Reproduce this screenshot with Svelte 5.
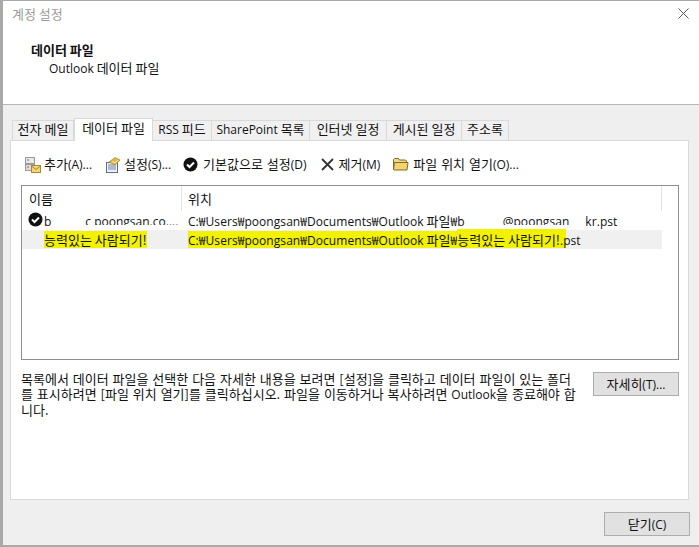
<script>
  const tabs = [
    { ko: '전자 메일', w: 62 },
    { ko: '데이터 파일', w: 79, active: true },
    { lat: 'RSS', ko: ' 피드', w: 59 },
    { lat: 'SharePoint', ko: ' 목록', w: 98 },
    { ko: '인터넷 일정', w: 77 },
    { ko: '게시된 일정', w: 75 },
    { ko: '주소록', w: 47 }
  ];
</script>

<div class="window">
  <div class="titlebar">
    <span class="title">계정 설정</span>
    <svg class="close" width="11" height="11" viewBox="0 0 11 11"><path d="M.5.5l10 10M10.5.5l-10 10" stroke="#555" fill="none"/></svg>
  </div>
  <div class="header">
    <div class="h1">데이터 파일</div>
    <div class="h2"><span class="lat">Outlook</span> 데이터 파일</div>
  </div>
  <div class="body">
    <div class="tabs">
      {#each tabs as t}
        <div class="tab" class:active={t.active} style="width:{t.w}px">{#if t.lat}<span class="lat">{t.lat}</span>{/if}{t.ko}</div>
      {/each}
    </div>
    <div class="panel">
      <div class="toolbar">
        <div class="tool add">
          <svg width="17" height="17" viewBox="0 0 17 17">
            <rect x="1.5" y="1.5" width="9" height="6" fill="#e8e8e8" stroke="#9a9a9a"/>
            <rect x="1.5" y="8.5" width="9" height="6" fill="#dcdcdc" stroke="#9a9a9a"/>
            <rect x="3" y="3.5" width="2" height="1" fill="#777"/>
            <rect x="3" y="10.5" width="2" height="1" fill="#777"/>
            <rect x="7.5" y="9.5" width="9" height="7" fill="#f2d675" stroke="#a98a2e"/>
            <path d="M7.5 10l4.500 3.500 4.500-3.500" fill="none" stroke="#a98a2e"/>
          </svg>
          <span>추가<span class="lat">(A)...</span></span>
        </div>
        <div class="tool set">
          <svg width="17" height="17" viewBox="0 0 17 17">
            <rect x="2.500" y="6.500" width="11" height="10" fill="#eef2f6" stroke="#5b6f86"/>
            <path d="M4 9h8M4 11h8M4 13h8" stroke="#6e859e"/>
            <path d="M5 6l6-4.500 5 2.500-5 5z" fill="#e2b94c" stroke="#a17f22" stroke-width=".7"/>
            <path d="M8 5.500l3 1.500 3-3" stroke="#fff2b8" fill="none" stroke-width=".8"/>
          </svg>
          <span>설정<span class="lat">(S)...</span></span>
        </div>
        <div class="tool def">
          <svg width="15" height="15" viewBox="0 0 15 15">
            <circle cx="7.500" cy="7.500" r="7" fill="#111"/>
            <path d="M4 7.500l2.500 2.500 4.500-4.500" stroke="#fff" stroke-width="2" fill="none"/>
          </svg>
          <span>기본값으로 설정<span class="lat">(D)</span></span>
        </div>
        <div class="tool rem">
          <svg width="13" height="13" viewBox="0 0 13 13"><path d="M1 1l11 11M12 1L1 12" stroke="#333" stroke-width="1.800" fill="none"/></svg>
          <span>제거<span class="lat">(M)</span></span>
        </div>
        <div class="tool open">
          <svg width="16" height="14" viewBox="0 0 16 14">
            <path d="M.5 12.500V2.500l1-1h4l1 1.500h6l1 1v1" fill="#f0d88c" stroke="#7f6a2a"/>
            <path d="M.5 12.500l1-7h13.500l-1 7.500H1z" fill="#f3d36c" stroke="#7f6a2a"/>
          </svg>
          <span>파일 위치 열기<span class="lat">(O)...</span></span>
        </div>
      </div>

      <div class="list">
        <div class="list-head">
          <div class="col-name">이름</div>
          <div class="col-path">위치</div>
        </div>
        <div class="row">
          <div class="cell-name">
            <svg class="check" width="15" height="15" viewBox="0 0 15 15">
              <circle cx="7.500" cy="7.500" r="7" fill="#111"/>
              <path d="M4 7.500l2.500 2.500 4.500-4.500" stroke="#fff" stroke-width="2" fill="none"/>
            </svg>
            <span class="lat">b<i class="gap g1"></i><span class="cut">c poongsan.co....</span></span>
          </div>
          <div class="cell-path"><span class="lat tight">C:₩Users₩poongsan₩Documents₩Outlook</span> 파일<span class="lat tight">₩b<i class="gap g2"></i><span class="cut">@poongsan</span><i class="gap g3"></i>kr.pst</span></div>
        </div>
        <div class="row sel">
          <div class="cell-name"><span class="hl">능력있는 사람되기!</span></div>
          <div class="cell-path"><span class="hl"><span class="lat tight">C:₩Users₩poongsan₩Documents₩Outlook</span> 파일<span class="lat tight">₩</span><span class="hl-up">능력있는 사람되기!</span></span><span class="lat ext">.pst</span></div>
        </div>
      </div>

      <div class="info">
        <p>목록에서 데이터 파일을 선택한 다음 자세한 내용을 보려면 [설정]을 클릭하고 데이터 파일이 있는 폴더를 표시하려면 [파일 위치 열기]를 클릭하십시오. 파일을 이동하거나 복사하려면 <span class="lat">Outlook</span>을 종료해야 합니다.</p>
        <button class="btn more">자세히<span class="lat">(T)...</span></button>
      </div>
    </div>
    <div class="footer"><button class="btn">닫기<span class="lat">(C)</span></button></div>
  </div>
</div>

<style>
  :global(body) { margin: 0; background: #fff; }
  .window {
    width: 699px; height: 547px; box-sizing: border-box;
    border: solid #a9a9a9; border-width: 1px 0 2px 3px;
    font: 13px/15px "Noto Sans CJK KR", sans-serif;
    color: #111; overflow: hidden; display: flex; flex-direction: column;
  }
  .lat { font-family: "Open Sans", "Noto Sans CJK KR", sans-serif; font-size: 12px; }
  .tight { letter-spacing: .06px; }
  .titlebar { height: 29px; display: flex; align-items: center; justify-content: space-between; padding: 0 10px 4px 9px; box-sizing: border-box; flex: none; }
  .title { color: #9a9a9a; }
  .header { height: 74px; flex: none; padding-left: 28px; box-sizing: border-box; }
  .h1 { font-weight: 700; padding-top: 11px; line-height: 17px; }
  .h2 { padding: 1px 0 0 18px; line-height: 17px; }
  .body { flex: 1; background: #efefef; border-top: 1px solid #b5b5b5; padding: 13px 10px 0 7px; display: flex; flex-direction: column; }
  .tabs { display: flex; padding-left: 2px; height: 22px; align-items: flex-end; position: relative; z-index: 1; }
  .tab {
    height: 20px; box-sizing: border-box; background: #f0f0f0; border: 1px solid #d9d9d9; border-bottom: 0; border-left-width: 0;
    text-align: center; line-height: 15px; white-space: nowrap;
  }
  .tab:first-child { border-left-width: 1px; }
  .tab.active { background: #fff; border-left-width: 1px; padding-top: 1px; margin-bottom: -1px; height: 23px; }
  .panel { height: 360px; box-sizing: border-box; background: #fff; border: 1px solid #d9d9d9; padding: 0 9px 0 10px; }
  .toolbar { height: 44px; display: flex; align-items: center; padding: 2px 0 0 3px; box-sizing: border-box; word-spacing: 1px; }
  .tool { display: flex; align-items: center; gap: 3px; white-space: nowrap; }
  .set { margin-left: 12px; }
  .def { margin-left: 12px; gap: 5px; }
  .rem { margin-left: 14px; gap: 5px; }
  .open { margin-left: 13px; gap: 4px; }
  .list { height: 175px; box-sizing: border-box; border: 1px solid #8f8f8f; }
  .list-head { display: flex; height: 25px; line-height: 25px; }
  .col-name { width: 160px; padding-left: 7px; box-sizing: border-box; border-right: 1px solid #e3e3e3; }
  .col-path { width: 480px; padding-left: 6px; box-sizing: border-box; border-right: 1px solid #e3e3e3; }
  .row { display: flex; width: 640px; height: 19px; line-height: 19px; white-space: nowrap; }
  .sel { background: #f0f0f0; }
  .cell-name { width: 160px; padding-left: 22px; box-sizing: border-box; position: relative; }
  .check { position: absolute; left: 6px; top: 1px; }
  .cell-path { padding-left: 6px; }
  .gap { display: inline-block; width: 38px; }
  .g1 { width: 34px; }
  .g2 { width: 38px; }
  .g3 { width: 16px; }
  .cut { position: relative; display: inline-block; line-height: 15px; }
  .cut::after { content: ""; position: absolute; left: 0; right: 0; bottom: 0; height: 4px; background: #fff; }
  .hl { background: #f2f200; display: inline-block; line-height: 17px; height: 17px; }
  .hl-up { display: inline-block; background: #f2f200; box-shadow: 0 -2px 0 #f2f200; padding-right: 6px; }
  .ext { margin-left: -6px; position: relative; }
  .info { display: flex; justify-content: space-between; align-items: flex-start; padding-top: 11px; }
  .info p { margin: 0; width: 558px; line-height: 15px; word-break: break-all; word-spacing: 1px; }
  .btn {
    font: inherit; color: inherit; width: 86px; height: 24px; padding: 0; background: #e1e1e1; border: 1px solid #adadad; border-radius: 0;
  }
  .more { margin-top: 1px; }
  .footer { display: flex; justify-content: flex-end; padding-top: 12px; margin-right: -1px; }
</style>
